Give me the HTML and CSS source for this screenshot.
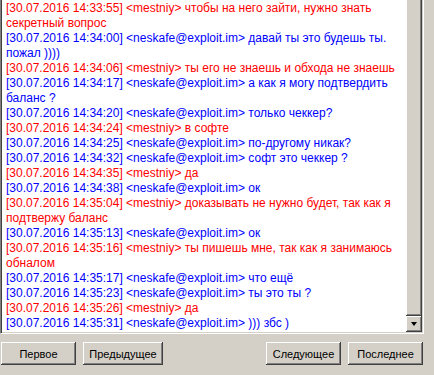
FILE: index.html
```html
<!DOCTYPE html>
<html lang="ru">
<head>
<meta charset="utf-8">
<title>История сообщений</title>
<link rel="stylesheet" href="styles.css">
</head>
<body>
<div class="window">
  <div class="pane">
    <div class="log">
      <div class="msg red">[30.07.2016 14:33:55] &lt;mestniy&gt; чтобы на него зайти, нужно знать<br>секретный вопрос</div>
      <div class="msg blue">[30.07.2016 14:34:00] &lt;neskafe@exploit.im&gt; давай ты это будешь ты.<br>пожал ))))</div>
      <div class="msg red">[30.07.2016 14:34:06] &lt;mestniy&gt; ты его не знаешь и обхода не знаешь</div>
      <div class="msg blue">[30.07.2016 14:34:17] &lt;neskafe@exploit.im&gt; а как я могу подтвердить<br>баланс ?</div>
      <div class="msg blue">[30.07.2016 14:34:20] &lt;neskafe@exploit.im&gt; только чеккер?</div>
      <div class="msg red">[30.07.2016 14:34:24] &lt;mestniy&gt; в софте</div>
      <div class="msg blue">[30.07.2016 14:34:25] &lt;neskafe@exploit.im&gt; по-другому никак?</div>
      <div class="msg blue">[30.07.2016 14:34:32] &lt;neskafe@exploit.im&gt; софт это чеккер ?</div>
      <div class="msg red">[30.07.2016 14:34:35] &lt;mestniy&gt; да</div>
      <div class="msg blue">[30.07.2016 14:34:38] &lt;neskafe@exploit.im&gt; ок</div>
      <div class="msg red">[30.07.2016 14:35:04] &lt;mestniy&gt; доказывать не нужно будет, так как я<br>подтвержу баланс</div>
      <div class="msg blue">[30.07.2016 14:35:13] &lt;neskafe@exploit.im&gt; ок</div>
      <div class="msg red">[30.07.2016 14:35:16] &lt;mestniy&gt; ты пишешь мне, так как я занимаюсь<br>обналом</div>
      <div class="msg blue">[30.07.2016 14:35:17] &lt;neskafe@exploit.im&gt; что ещё</div>
      <div class="msg blue">[30.07.2016 14:35:23] &lt;neskafe@exploit.im&gt; ты это ты ?</div>
      <div class="msg red">[30.07.2016 14:35:26] &lt;mestniy&gt; да</div>
      <div class="msg blue">[30.07.2016 14:35:31] &lt;neskafe@exploit.im&gt; ))) збс )</div>
    </div>
    <div class="scrollbar">
      <div class="thumb"></div>
      <div class="arrow"><span class="tri"></span></div>
    </div>
  </div>
  <div class="buttons">
    <div class="group">
      <button class="btn w75">Первое</button>
      <button class="btn w80">Предыдущее</button>
    </div>
    <div class="group">
      <button class="btn w75">Следующее</button>
      <button class="btn w75">Последнее</button>
    </div>
  </div>
</div>
</body>
</html>
```

FILE: styles.css
```css
html, body {
  margin: 0;
  padding: 0;
}
body {
  background: #d4d0c8;
  width: 434px;
  height: 375px;
  overflow: hidden;
}
.window {
  display: flex;
  flex-direction: column;
  width: 434px;
  height: 375px;
}
.pane {
  display: flex;
  width: 420px;
  height: 332px;
  border-left: 1px solid #808080;
  border-right: 1px solid #ffffff;
  border-bottom: 1px solid #ffffff;
  box-shadow: inset 1px 0 0 #404040, inset -1px -1px 0 #d4d0c8;
  padding: 0 1px 1px 1px;
}
.log {
  flex: 1;
  background: #ffffff;
  padding: 1px 0 0 4px;
  font-family: "Liberation Sans", Arial, sans-serif;
  font-size: 12px;
  line-height: 15px;
  white-space: nowrap;
  overflow: hidden;
}
.red { color: #ff0000; }
.blue { color: #0000ff; }
.scrollbar {
  width: 16px;
  display: flex;
  flex-direction: column;
}
.thumb {
  flex: 1;
  background: #d4d0c8;
  box-shadow: inset -1px -1px 0 #404040, inset 1px 0 0 #ffffff, inset -2px -2px 0 #808080;
}
.arrow {
  height: 16px;
  background: #d4d0c8;
  box-shadow: inset -1px -1px 0 #404040, inset 1px 1px 0 #ffffff, inset -2px -2px 0 #808080;
  display: flex;
  align-items: center;
  justify-content: center;
}
.tri {
  width: 0;
  height: 0;
  border-left: 3.5px solid transparent;
  border-right: 3.5px solid transparent;
  border-top: 4px solid #000000;
  margin-top: 0;
}
.buttons {
  display: flex;
  justify-content: space-between;
  padding: 8px 11px 0 1px;
}
.group {
  display: flex;
  gap: 7px;
}
.btn {
  height: 23px;
  margin: 0;
  padding: 0;
  border: none;
  background: #d4d0c8;
  box-shadow: inset -1px -1px 0 #404040, inset 1px 1px 0 #ffffff, inset -2px -2px 0 #808080;
  font-family: "Liberation Sans", Tahoma, sans-serif;
  font-size: 11px;
  color: #000000;
}
.w75 { width: 75px; }
.w80 { width: 80px; }
```
